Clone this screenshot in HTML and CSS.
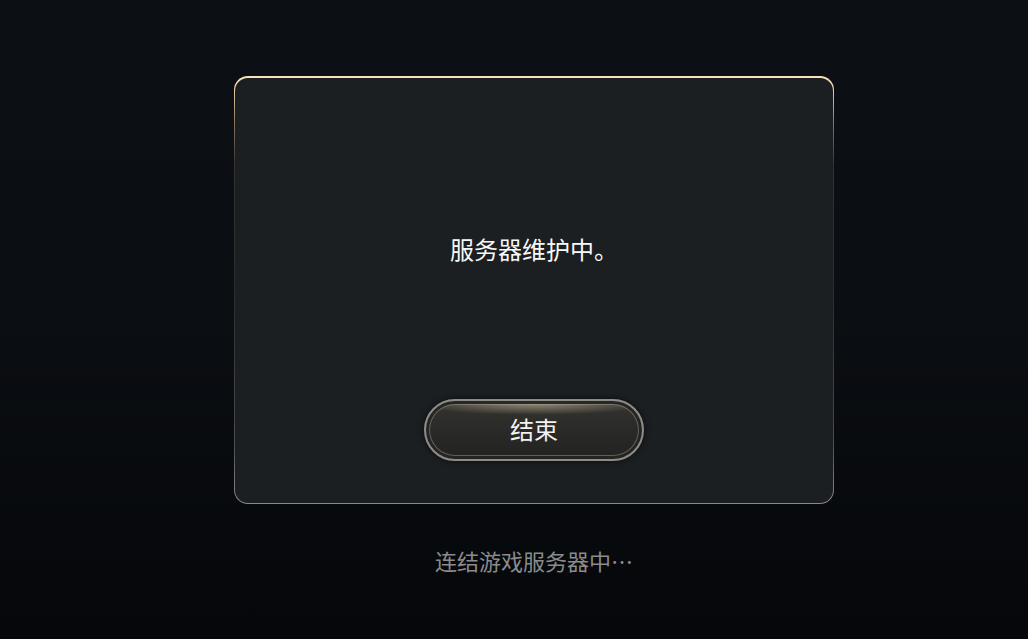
FILE: index.html
```html
<!DOCTYPE html>
<html lang="zh-CN">
<head>
    <meta charset="UTF-8">
    <meta name="viewport" content="width=device-width, initial-scale=1.0">
    <title>服务器维护中</title>
    <link rel="stylesheet" href="styles.css">
</head>
<body>
    <div class="frame">
        <div class="dialog">
            <div class="message">服务器维护中。</div>
            <button class="btn-end">结束</button>
        </div>
    </div>
    <div class="status">连结游戏服务器中…</div>
</body>
</html>
```

FILE: styles.css
```css
html, body {
    margin: 0;
    height: 100%;
}
body {
    display: flex;
    flex-direction: column;
    align-items: center;
    box-sizing: border-box;
    height: 639px;
    padding-left: 40px;
    overflow: hidden;
    background: linear-gradient(to bottom, #0c0f14 0%, #0b0e12 50%, #05070a 100%);
    font-family: "Noto Sans CJK SC", "Noto Sans", sans-serif;
}
.frame {
    margin-top: 76px;
    width: 600px;
    height: 428px;
    box-sizing: border-box;
    padding: 2px 1px 1px;
    border-radius: 14px;
    background: linear-gradient(to bottom,
        #f7e2bb 0px,
        #e8cea3 14px,
        #8a7a62 45px,
        #33322f 90px,
        #2a2d2f 50%,
        #4a4b4c 85%,
        #8a8a8a 100%);
}
.dialog {
    height: 100%;
    box-sizing: border-box;
    border-radius: 13px;
    background: #1b1f22;
    display: flex;
    flex-direction: column;
    align-items: center;
    padding: 155px 0 42px;
}
.message {
    color: #f8f8f8;
    font-size: 24px;
    line-height: 32px;
}
.btn-end {
    margin-top: auto;
    width: 220px;
    height: 62px;
    border-radius: 31px;
    border: 2px solid #8e8c87;
    background:
        radial-gradient(ellipse 55% 20% at 50% 4%, rgba(246, 226, 190, 0.5), rgba(246, 226, 190, 0) 100%),
        linear-gradient(to bottom, #343330 0%, #2a2a28 50%, #222221 100%);
    box-shadow: inset 0 0 0 3px rgba(30, 30, 28, 0.9), inset 0 0 0 4px rgba(170, 165, 155, 0.45), 0 0 6px rgba(0, 0, 0, 0.6);
    color: #f2f2f2;
    font-family: inherit;
    font-size: 24px;
    padding: 0 0 4px;
}
.status {
    margin-top: 42px;
    color: #8b8b8d;
    font-size: 22px;
    line-height: 28px;
}
```
